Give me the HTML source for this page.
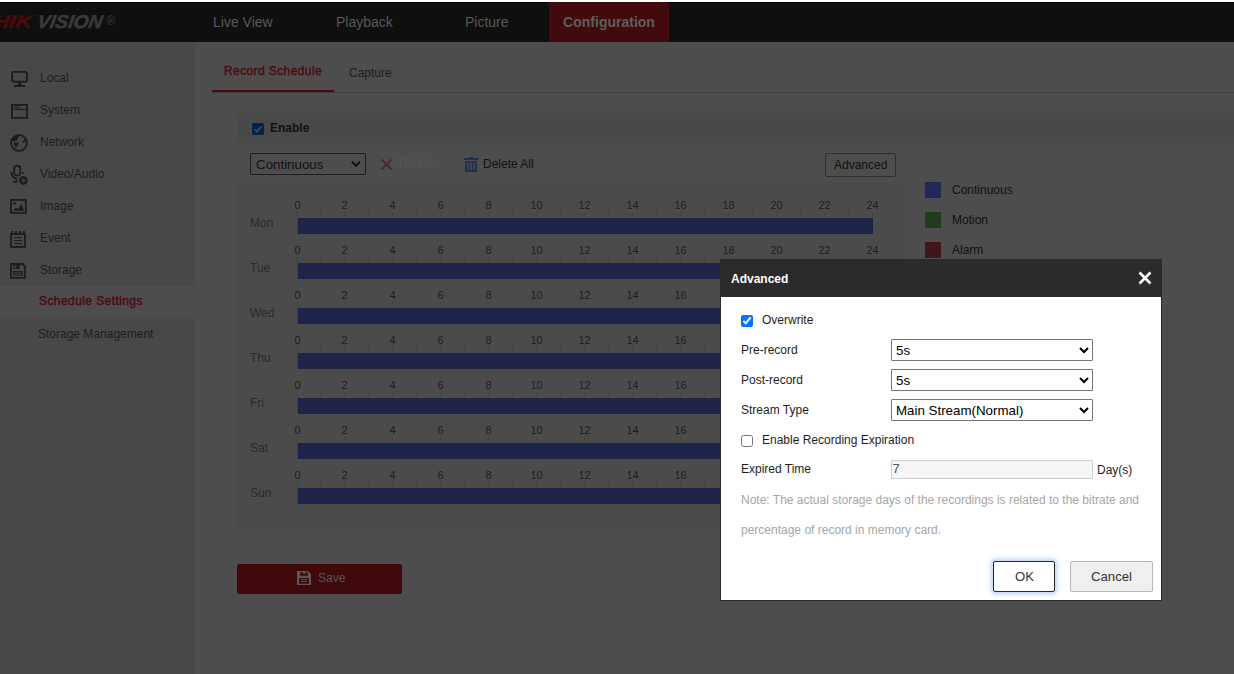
<!DOCTYPE html>
<html><head><meta charset="utf-8">
<style>
*{box-sizing:border-box;margin:0;padding:0}
html,body{width:1234px;height:674px;overflow:hidden;background:#4d4d4d;font-family:"Liberation Sans",sans-serif;font-size:12px;color:#1e1e1e}
.a{position:absolute;white-space:nowrap}
.t{position:absolute;white-space:nowrap;line-height:14px;height:14px}
#topwhite{position:absolute;left:0;top:0;width:1234px;height:2px;background:#fff}
#header{position:absolute;left:0;top:2px;width:1234px;height:40px;background:#0f0f0f;border-top:1px solid #000}
.nav{position:absolute;top:-1px;height:40px;line-height:40px;font-size:14px;color:#585858;white-space:nowrap}
#sidebar{position:absolute;left:0;top:42px;width:195px;height:632px;background:#484848}
.si{color:#1d1d1d}
.ic{position:absolute;left:0;top:0;overflow:visible}
.tk{position:absolute;width:1px;background:#424242}
.num{position:absolute;font-family:"Liberation Sans",sans-serif;font-size:11px;color:#1e1e1e;line-height:11px;width:30px;text-align:center;transform:translateX(0.5px)}
.bar{position:absolute;left:298px;width:575px;height:16px;background:#1f2548}
.day{position:absolute;left:250px;color:#2a2a2a;line-height:14px}
.lbl{position:absolute;left:741px;color:#1e1e1e;line-height:14px}
select.ms{position:absolute;left:891px;width:202px;height:22px;font-family:"Liberation Sans",sans-serif;font-size:13.333px;color:#000;background:#fff;border:1px solid #767676;border-radius:1px;padding-left:0}
</style></head>
<body>
<div id="topwhite"></div>
<div id="header">
  <svg class="ic" width="130" height="40" style="left:0;top:-1px">
    <g transform="translate(0,26) skewX(-9)" font-family="Liberation Sans" font-weight="bold" font-style="italic" font-size="18.6">
    <text x="-8" y="0" fill="#4a0a0c" stroke="#4a0a0c" stroke-width="0.5" textLength="39" lengthAdjust="spacingAndGlyphs">HIK</text>
    <text x="36.5" y="0" fill="#393939" stroke="#393939" stroke-width="0.5" textLength="65" lengthAdjust="spacingAndGlyphs">VISION</text>
    </g>
    <text x="106.5" y="22.5" font-family="Liberation Sans" font-size="12" fill="#3a3a3a">®</text>
  </svg>
  <div class="nav" style="left:213px">Live View</div>
  <div class="nav" style="left:336px">Playback</div>
  <div class="nav" style="left:465px">Picture</div>
  <div class="nav" style="left:549px;width:120px;background:#430a0d;font-weight:bold;text-align:center;color:#5e5e5e">Configuration</div>
</div>

<div id="sidebar"></div>
<div class="a" style="left:0;top:286px;width:195px;height:33px;background:#4d4d4d"></div>
<svg class="ic" width="40" height="300" style="left:0;top:0;position:absolute">
  <g fill="none" stroke="#1d1d1d" stroke-width="1.85">
    <rect x="12.1" y="71.9" width="14.8" height="9.8" rx="1.8"/>
    <rect x="11.95" y="104.95" width="15.1" height="12.9"/>
    <circle cx="19" cy="142.9" r="7.9"/>
    <rect x="14.1" y="165.7" width="6.2" height="9.9" rx="3.1"/>
    <path d="M11.4 172 Q11.6 177.8 16.6 178.6"/>
    <rect x="11.05" y="199.95" width="14.8" height="12.9"/>
    <rect x="11.05" y="234.05" width="13.9" height="12.9"/>
    <path d="M11.05 263.95 H22.6 L24.95 266.4 V277.85 H11.05 Z"/>
  </g>
  <g fill="#1d1d1d">
    <path d="M18.3 82 h2.8 v3.2 h-2.8z M14.2 85 h10.8 l0.2 1.9 h-11.2z"/>
    <rect x="11.5" y="108.8" width="16" height="1.2"/>
    <circle cx="14.6" cy="107.4" r="0.8"/><circle cx="16.6" cy="107.4" r="0.8"/><circle cx="18.6" cy="107.4" r="0.8"/>
    <path d="M12.3 140.5 L13 138 L15 136 L18.3 135.2 L18.6 137 L17.4 138.8 L16.8 141.1 L13.2 141.2 Z"/>
    <path d="M13.9 142.6 L18.9 142.6 L18.4 144.6 L16.9 146.3 L16.3 148.2 L15.4 147.4 L14.8 145.1 L13.8 144.4 Z"/>
    <path d="M22.2 141.8 L25 139.3 L25.9 141 L24.6 142.6 L22.8 143 Z"/>
    <path d="M15.6 178 h1.7 v3.4 h-1.7z M13.1 181 h4.4 v1.8 h-4.4z"/>
    <rect x="22.2" y="172" width="1.8" height="1.8"/>
    <circle cx="23.4" cy="180.4" r="4.3"/>
    <circle cx="14.5" cy="203.3" r="1.4"/>
    <path d="M13.2 210.7 L15.9 207.4 L18 209.2 L21.6 203.8 L24 210.7z"/>
    <rect x="11" y="231" width="1.9" height="2.5"/><rect x="15" y="231" width="1.9" height="2.5"/><rect x="19" y="231" width="1.9" height="2.5"/><rect x="23" y="231" width="1.9" height="2.5"/>
    <rect x="14.1" y="237" width="7.9" height="1.1"/><rect x="14.1" y="240" width="7.9" height="1.1"/><rect x="14.1" y="243" width="7.9" height="1.1"/>
    <path d="M13.2 265 h6.6 v3.8 h-6.6z"/>
    <path d="M13.2 271 h9.6 v4.8 h-9.6z"/>
  </g>
  <path d="M22.2 178.2 L25.8 180.4 L22.2 182.6z" fill="#484848"/>
  <rect x="14.5" y="265.6" width="1.3" height="2.6" fill="#484848"/>
  <rect x="14.3" y="272.3" width="7.4" height="0.8" fill="#484848"/>
  <rect x="14.3" y="274" width="7.4" height="0.8" fill="#484848"/>
</svg>
<div class="t si" style="left:40px;top:71px">Local</div>
<div class="t si" style="left:40px;top:103px">System</div>
<div class="t si" style="left:40px;top:135px">Network</div>
<div class="t si" style="left:40px;top:167px">Video/Audio</div>
<div class="t si" style="left:40px;top:199px">Image</div>
<div class="t si" style="left:40px;top:231px">Event</div>
<div class="t si" style="left:40px;top:263px">Storage</div>
<div class="t" style="left:39px;top:294px;letter-spacing:0.42px;-webkit-text-stroke:0.45px #4c0c12;color:#4c0c12">Schedule Settings</div>
<div class="t si" style="left:38px;top:327px">Storage Management</div>

<!-- tabs -->
<div class="t" style="left:224px;top:64px;letter-spacing:0.4px;-webkit-text-stroke:0.45px #4e0c12;color:#4e0c12">Record Schedule</div>
<div class="t" style="left:349px;top:66px;color:#1e1e1e">Capture</div>
<div class="a" style="left:212px;top:92px;width:1022px;height:1px;background:#3f3f3f"></div>
<div class="a" style="left:212px;top:90px;width:122px;height:2px;background:#480a0d"></div>

<!-- enable band -->
<div class="a" style="left:237px;top:113px;width:997px;height:30px;background:#494949"></div>
<div class="a" style="left:252px;top:123px;width:12px;height:12px;background:#00234c;border-radius:2px"></div>
<svg class="ic" style="position:absolute;left:252px;top:123px" width="12" height="12"><path d="M2.6 6.3 L4.9 8.6 L9.4 3.6" fill="none" stroke="#4d4d4d" stroke-width="1.5"/></svg>
<div class="t" style="left:270px;top:121px;font-weight:bold;color:#111">Enable</div>

<!-- toolbar -->
<div class="a" style="left:250px;top:153px;width:116px;height:22px;border:1px solid #1e1e1e;border-radius:2px;background:#4d4d4d"></div>
<div class="a" style="left:256px;top:156.5px;font-size:13.333px;line-height:15px;color:#111">Continuous</div>
<svg class="ic" style="position:absolute;left:350px;top:158px" width="12" height="12"><path d="M1.9 3.8 L5.9 7.8 L9.9 3.8" fill="none" stroke="#111" stroke-width="2.1"/></svg>
<svg class="ic" style="position:absolute;left:380px;top:158px" width="14" height="14"><path d="M1.5 1.5 L11.5 11.5 M11.5 1.5 L1.5 11.5" fill="none" stroke="#522629" stroke-width="1.9"/></svg>
<div class="t" style="left:399px;top:157px;color:#555555">Delete</div>
<svg class="ic" style="position:absolute;left:463px;top:156px" width="16" height="18" fill="#183350">
  <rect x="6.3" y="1" width="3.7" height="1.2"/>
  <rect x="1" y="2" width="14" height="2"/>
  <path d="M2 5 h12 v11 h-12z M4.2 6.2 v8 h1.4 v-8z M7.2 6.2 v8 h1.6 v-8z M10.4 6.2 v8 h1.4 v-8z" fill-rule="evenodd"/>
</svg>
<div class="t" style="left:483px;top:157px;color:#111">Delete All</div>
<div class="a" style="left:825px;top:153px;width:71px;height:24px;border:1px solid #2f2f2f;border-radius:2px"></div>
<div class="t" style="left:834px;top:158px;color:#111">Advanced</div>

<!-- schedule panel -->
<div class="a" style="left:237px;top:182px;width:673px;height:347px;background:#4b4b4b"></div>
<div id="sched"><div class="num" style="left:282px;top:200px">0</div><div class="num" style="left:329px;top:200px">2</div><div class="num" style="left:377px;top:200px">4</div><div class="num" style="left:425px;top:200px">6</div><div class="num" style="left:473px;top:200px">8</div><div class="num" style="left:521px;top:200px">10</div><div class="num" style="left:569px;top:200px">12</div><div class="num" style="left:617px;top:200px">14</div><div class="num" style="left:665px;top:200px">16</div><div class="num" style="left:713px;top:200px">18</div><div class="num" style="left:761px;top:200px">20</div><div class="num" style="left:809px;top:200px">22</div><div class="num" style="left:857px;top:200px">24</div><div class="tk" style="left:297px;top:212px;height:5px"></div><div class="tk" style="left:320px;top:212px;height:5px"></div><div class="tk" style="left:344px;top:212px;height:5px"></div><div class="tk" style="left:368px;top:212px;height:5px"></div><div class="tk" style="left:392px;top:212px;height:5px"></div><div class="tk" style="left:416px;top:212px;height:5px"></div><div class="tk" style="left:440px;top:212px;height:5px"></div><div class="tk" style="left:464px;top:212px;height:5px"></div><div class="tk" style="left:488px;top:212px;height:5px"></div><div class="tk" style="left:512px;top:212px;height:5px"></div><div class="tk" style="left:536px;top:212px;height:5px"></div><div class="tk" style="left:560px;top:212px;height:5px"></div><div class="tk" style="left:584px;top:212px;height:5px"></div><div class="tk" style="left:608px;top:212px;height:5px"></div><div class="tk" style="left:632px;top:212px;height:5px"></div><div class="tk" style="left:656px;top:212px;height:5px"></div><div class="tk" style="left:680px;top:212px;height:5px"></div><div class="tk" style="left:704px;top:212px;height:5px"></div><div class="tk" style="left:728px;top:212px;height:5px"></div><div class="tk" style="left:752px;top:212px;height:5px"></div><div class="tk" style="left:776px;top:212px;height:5px"></div><div class="tk" style="left:800px;top:212px;height:5px"></div><div class="tk" style="left:824px;top:212px;height:5px"></div><div class="tk" style="left:848px;top:212px;height:5px"></div><div class="tk" style="left:872px;top:212px;height:5px"></div><div class="tk" style="left:297px;top:212px;height:22px"></div><div class="bar" style="top:218px"></div><div class="num" style="left:282px;top:245px">0</div><div class="num" style="left:329px;top:245px">2</div><div class="num" style="left:377px;top:245px">4</div><div class="num" style="left:425px;top:245px">6</div><div class="num" style="left:473px;top:245px">8</div><div class="num" style="left:521px;top:245px">10</div><div class="num" style="left:569px;top:245px">12</div><div class="num" style="left:617px;top:245px">14</div><div class="num" style="left:665px;top:245px">16</div><div class="num" style="left:713px;top:245px">18</div><div class="num" style="left:761px;top:245px">20</div><div class="num" style="left:809px;top:245px">22</div><div class="num" style="left:857px;top:245px">24</div><div class="tk" style="left:297px;top:257px;height:5px"></div><div class="tk" style="left:320px;top:257px;height:5px"></div><div class="tk" style="left:344px;top:257px;height:5px"></div><div class="tk" style="left:368px;top:257px;height:5px"></div><div class="tk" style="left:392px;top:257px;height:5px"></div><div class="tk" style="left:416px;top:257px;height:5px"></div><div class="tk" style="left:440px;top:257px;height:5px"></div><div class="tk" style="left:464px;top:257px;height:5px"></div><div class="tk" style="left:488px;top:257px;height:5px"></div><div class="tk" style="left:512px;top:257px;height:5px"></div><div class="tk" style="left:536px;top:257px;height:5px"></div><div class="tk" style="left:560px;top:257px;height:5px"></div><div class="tk" style="left:584px;top:257px;height:5px"></div><div class="tk" style="left:608px;top:257px;height:5px"></div><div class="tk" style="left:632px;top:257px;height:5px"></div><div class="tk" style="left:656px;top:257px;height:5px"></div><div class="tk" style="left:680px;top:257px;height:5px"></div><div class="tk" style="left:704px;top:257px;height:5px"></div><div class="tk" style="left:728px;top:257px;height:5px"></div><div class="tk" style="left:752px;top:257px;height:5px"></div><div class="tk" style="left:776px;top:257px;height:5px"></div><div class="tk" style="left:800px;top:257px;height:5px"></div><div class="tk" style="left:824px;top:257px;height:5px"></div><div class="tk" style="left:848px;top:257px;height:5px"></div><div class="tk" style="left:872px;top:257px;height:5px"></div><div class="tk" style="left:297px;top:257px;height:22px"></div><div class="bar" style="top:263px"></div><div class="num" style="left:282px;top:290px">0</div><div class="num" style="left:329px;top:290px">2</div><div class="num" style="left:377px;top:290px">4</div><div class="num" style="left:425px;top:290px">6</div><div class="num" style="left:473px;top:290px">8</div><div class="num" style="left:521px;top:290px">10</div><div class="num" style="left:569px;top:290px">12</div><div class="num" style="left:617px;top:290px">14</div><div class="num" style="left:665px;top:290px">16</div><div class="num" style="left:713px;top:290px">18</div><div class="num" style="left:761px;top:290px">20</div><div class="num" style="left:809px;top:290px">22</div><div class="num" style="left:857px;top:290px">24</div><div class="tk" style="left:297px;top:302px;height:5px"></div><div class="tk" style="left:320px;top:302px;height:5px"></div><div class="tk" style="left:344px;top:302px;height:5px"></div><div class="tk" style="left:368px;top:302px;height:5px"></div><div class="tk" style="left:392px;top:302px;height:5px"></div><div class="tk" style="left:416px;top:302px;height:5px"></div><div class="tk" style="left:440px;top:302px;height:5px"></div><div class="tk" style="left:464px;top:302px;height:5px"></div><div class="tk" style="left:488px;top:302px;height:5px"></div><div class="tk" style="left:512px;top:302px;height:5px"></div><div class="tk" style="left:536px;top:302px;height:5px"></div><div class="tk" style="left:560px;top:302px;height:5px"></div><div class="tk" style="left:584px;top:302px;height:5px"></div><div class="tk" style="left:608px;top:302px;height:5px"></div><div class="tk" style="left:632px;top:302px;height:5px"></div><div class="tk" style="left:656px;top:302px;height:5px"></div><div class="tk" style="left:680px;top:302px;height:5px"></div><div class="tk" style="left:704px;top:302px;height:5px"></div><div class="tk" style="left:728px;top:302px;height:5px"></div><div class="tk" style="left:752px;top:302px;height:5px"></div><div class="tk" style="left:776px;top:302px;height:5px"></div><div class="tk" style="left:800px;top:302px;height:5px"></div><div class="tk" style="left:824px;top:302px;height:5px"></div><div class="tk" style="left:848px;top:302px;height:5px"></div><div class="tk" style="left:872px;top:302px;height:5px"></div><div class="tk" style="left:297px;top:302px;height:22px"></div><div class="bar" style="top:308px"></div><div class="num" style="left:282px;top:335px">0</div><div class="num" style="left:329px;top:335px">2</div><div class="num" style="left:377px;top:335px">4</div><div class="num" style="left:425px;top:335px">6</div><div class="num" style="left:473px;top:335px">8</div><div class="num" style="left:521px;top:335px">10</div><div class="num" style="left:569px;top:335px">12</div><div class="num" style="left:617px;top:335px">14</div><div class="num" style="left:665px;top:335px">16</div><div class="num" style="left:713px;top:335px">18</div><div class="num" style="left:761px;top:335px">20</div><div class="num" style="left:809px;top:335px">22</div><div class="num" style="left:857px;top:335px">24</div><div class="tk" style="left:297px;top:347px;height:5px"></div><div class="tk" style="left:320px;top:347px;height:5px"></div><div class="tk" style="left:344px;top:347px;height:5px"></div><div class="tk" style="left:368px;top:347px;height:5px"></div><div class="tk" style="left:392px;top:347px;height:5px"></div><div class="tk" style="left:416px;top:347px;height:5px"></div><div class="tk" style="left:440px;top:347px;height:5px"></div><div class="tk" style="left:464px;top:347px;height:5px"></div><div class="tk" style="left:488px;top:347px;height:5px"></div><div class="tk" style="left:512px;top:347px;height:5px"></div><div class="tk" style="left:536px;top:347px;height:5px"></div><div class="tk" style="left:560px;top:347px;height:5px"></div><div class="tk" style="left:584px;top:347px;height:5px"></div><div class="tk" style="left:608px;top:347px;height:5px"></div><div class="tk" style="left:632px;top:347px;height:5px"></div><div class="tk" style="left:656px;top:347px;height:5px"></div><div class="tk" style="left:680px;top:347px;height:5px"></div><div class="tk" style="left:704px;top:347px;height:5px"></div><div class="tk" style="left:728px;top:347px;height:5px"></div><div class="tk" style="left:752px;top:347px;height:5px"></div><div class="tk" style="left:776px;top:347px;height:5px"></div><div class="tk" style="left:800px;top:347px;height:5px"></div><div class="tk" style="left:824px;top:347px;height:5px"></div><div class="tk" style="left:848px;top:347px;height:5px"></div><div class="tk" style="left:872px;top:347px;height:5px"></div><div class="tk" style="left:297px;top:347px;height:22px"></div><div class="bar" style="top:353px"></div><div class="num" style="left:282px;top:380px">0</div><div class="num" style="left:329px;top:380px">2</div><div class="num" style="left:377px;top:380px">4</div><div class="num" style="left:425px;top:380px">6</div><div class="num" style="left:473px;top:380px">8</div><div class="num" style="left:521px;top:380px">10</div><div class="num" style="left:569px;top:380px">12</div><div class="num" style="left:617px;top:380px">14</div><div class="num" style="left:665px;top:380px">16</div><div class="num" style="left:713px;top:380px">18</div><div class="num" style="left:761px;top:380px">20</div><div class="num" style="left:809px;top:380px">22</div><div class="num" style="left:857px;top:380px">24</div><div class="tk" style="left:297px;top:392px;height:5px"></div><div class="tk" style="left:320px;top:392px;height:5px"></div><div class="tk" style="left:344px;top:392px;height:5px"></div><div class="tk" style="left:368px;top:392px;height:5px"></div><div class="tk" style="left:392px;top:392px;height:5px"></div><div class="tk" style="left:416px;top:392px;height:5px"></div><div class="tk" style="left:440px;top:392px;height:5px"></div><div class="tk" style="left:464px;top:392px;height:5px"></div><div class="tk" style="left:488px;top:392px;height:5px"></div><div class="tk" style="left:512px;top:392px;height:5px"></div><div class="tk" style="left:536px;top:392px;height:5px"></div><div class="tk" style="left:560px;top:392px;height:5px"></div><div class="tk" style="left:584px;top:392px;height:5px"></div><div class="tk" style="left:608px;top:392px;height:5px"></div><div class="tk" style="left:632px;top:392px;height:5px"></div><div class="tk" style="left:656px;top:392px;height:5px"></div><div class="tk" style="left:680px;top:392px;height:5px"></div><div class="tk" style="left:704px;top:392px;height:5px"></div><div class="tk" style="left:728px;top:392px;height:5px"></div><div class="tk" style="left:752px;top:392px;height:5px"></div><div class="tk" style="left:776px;top:392px;height:5px"></div><div class="tk" style="left:800px;top:392px;height:5px"></div><div class="tk" style="left:824px;top:392px;height:5px"></div><div class="tk" style="left:848px;top:392px;height:5px"></div><div class="tk" style="left:872px;top:392px;height:5px"></div><div class="tk" style="left:297px;top:392px;height:22px"></div><div class="bar" style="top:398px"></div><div class="num" style="left:282px;top:425px">0</div><div class="num" style="left:329px;top:425px">2</div><div class="num" style="left:377px;top:425px">4</div><div class="num" style="left:425px;top:425px">6</div><div class="num" style="left:473px;top:425px">8</div><div class="num" style="left:521px;top:425px">10</div><div class="num" style="left:569px;top:425px">12</div><div class="num" style="left:617px;top:425px">14</div><div class="num" style="left:665px;top:425px">16</div><div class="num" style="left:713px;top:425px">18</div><div class="num" style="left:761px;top:425px">20</div><div class="num" style="left:809px;top:425px">22</div><div class="num" style="left:857px;top:425px">24</div><div class="tk" style="left:297px;top:437px;height:5px"></div><div class="tk" style="left:320px;top:437px;height:5px"></div><div class="tk" style="left:344px;top:437px;height:5px"></div><div class="tk" style="left:368px;top:437px;height:5px"></div><div class="tk" style="left:392px;top:437px;height:5px"></div><div class="tk" style="left:416px;top:437px;height:5px"></div><div class="tk" style="left:440px;top:437px;height:5px"></div><div class="tk" style="left:464px;top:437px;height:5px"></div><div class="tk" style="left:488px;top:437px;height:5px"></div><div class="tk" style="left:512px;top:437px;height:5px"></div><div class="tk" style="left:536px;top:437px;height:5px"></div><div class="tk" style="left:560px;top:437px;height:5px"></div><div class="tk" style="left:584px;top:437px;height:5px"></div><div class="tk" style="left:608px;top:437px;height:5px"></div><div class="tk" style="left:632px;top:437px;height:5px"></div><div class="tk" style="left:656px;top:437px;height:5px"></div><div class="tk" style="left:680px;top:437px;height:5px"></div><div class="tk" style="left:704px;top:437px;height:5px"></div><div class="tk" style="left:728px;top:437px;height:5px"></div><div class="tk" style="left:752px;top:437px;height:5px"></div><div class="tk" style="left:776px;top:437px;height:5px"></div><div class="tk" style="left:800px;top:437px;height:5px"></div><div class="tk" style="left:824px;top:437px;height:5px"></div><div class="tk" style="left:848px;top:437px;height:5px"></div><div class="tk" style="left:872px;top:437px;height:5px"></div><div class="tk" style="left:297px;top:437px;height:22px"></div><div class="bar" style="top:443px"></div><div class="num" style="left:282px;top:470px">0</div><div class="num" style="left:329px;top:470px">2</div><div class="num" style="left:377px;top:470px">4</div><div class="num" style="left:425px;top:470px">6</div><div class="num" style="left:473px;top:470px">8</div><div class="num" style="left:521px;top:470px">10</div><div class="num" style="left:569px;top:470px">12</div><div class="num" style="left:617px;top:470px">14</div><div class="num" style="left:665px;top:470px">16</div><div class="num" style="left:713px;top:470px">18</div><div class="num" style="left:761px;top:470px">20</div><div class="num" style="left:809px;top:470px">22</div><div class="num" style="left:857px;top:470px">24</div><div class="tk" style="left:297px;top:482px;height:5px"></div><div class="tk" style="left:320px;top:482px;height:5px"></div><div class="tk" style="left:344px;top:482px;height:5px"></div><div class="tk" style="left:368px;top:482px;height:5px"></div><div class="tk" style="left:392px;top:482px;height:5px"></div><div class="tk" style="left:416px;top:482px;height:5px"></div><div class="tk" style="left:440px;top:482px;height:5px"></div><div class="tk" style="left:464px;top:482px;height:5px"></div><div class="tk" style="left:488px;top:482px;height:5px"></div><div class="tk" style="left:512px;top:482px;height:5px"></div><div class="tk" style="left:536px;top:482px;height:5px"></div><div class="tk" style="left:560px;top:482px;height:5px"></div><div class="tk" style="left:584px;top:482px;height:5px"></div><div class="tk" style="left:608px;top:482px;height:5px"></div><div class="tk" style="left:632px;top:482px;height:5px"></div><div class="tk" style="left:656px;top:482px;height:5px"></div><div class="tk" style="left:680px;top:482px;height:5px"></div><div class="tk" style="left:704px;top:482px;height:5px"></div><div class="tk" style="left:728px;top:482px;height:5px"></div><div class="tk" style="left:752px;top:482px;height:5px"></div><div class="tk" style="left:776px;top:482px;height:5px"></div><div class="tk" style="left:800px;top:482px;height:5px"></div><div class="tk" style="left:824px;top:482px;height:5px"></div><div class="tk" style="left:848px;top:482px;height:5px"></div><div class="tk" style="left:872px;top:482px;height:5px"></div><div class="tk" style="left:297px;top:482px;height:22px"></div><div class="bar" style="top:488px"></div><div class="day" style="top:216px">Mon</div><div class="day" style="top:261px">Tue</div><div class="day" style="top:306px">Wed</div><div class="day" style="top:351px">Thu</div><div class="day" style="top:396px">Fri</div><div class="day" style="top:441px">Sat</div><div class="day" style="top:486px">Sun</div></div>

<!-- legend -->
<div class="a" style="left:925px;top:182px;width:16px;height:16px;background:#212958"></div>
<div class="a" style="left:925px;top:212px;width:16px;height:16px;background:#233a1f"></div>
<div class="a" style="left:925px;top:242px;width:16px;height:16px;background:#421618"></div>
<div class="t" style="left:952px;top:183px;color:#111">Continuous</div>
<div class="t" style="left:952px;top:213px;color:#111">Motion</div>
<div class="t" style="left:952px;top:243px;color:#111">Alarm</div>

<!-- save -->
<div class="a" style="left:237px;top:564px;width:165px;height:30px;background:#400a0d;border-radius:2px"></div>
<svg class="ic" style="position:absolute;left:292px;top:566px" width="24" height="24">
  <path d="M5 5 H16 L19 8 V19 H5 Z" fill="#585858"/>
  <rect x="7.1" y="12.1" width="9.8" height="5.7" rx="0.8" fill="#400a0d"/>
  <rect x="8.2" y="6.2" width="7.6" height="3.6" fill="#400a0d"/>
  <rect x="11" y="6.2" width="2.7" height="1.6" fill="#585858"/>
  <rect x="9.1" y="13.1" width="5.9" height="0.9" fill="#585858"/>
  <rect x="9.1" y="15.1" width="5.9" height="0.9" fill="#585858"/>
</svg>
<div class="t" style="left:318px;top:571px;color:#565656">Save</div>

<!-- modal -->
<div class="a" style="left:720px;top:259px;width:442px;height:342px;background:#fff;border:1px solid #2b2b2b"></div>
<div class="a" style="left:720px;top:259px;width:442px;height:38px;background:#2b2b2b"></div>
<div class="t" style="left:731px;top:272px;font-weight:bold;color:#fff">Advanced</div>
<svg class="ic" style="position:absolute;left:1137px;top:270px" width="16" height="16"><path d="M2.5 2.5 L13.5 13.5 M13.5 2.5 L2.5 13.5" fill="none" stroke="#fff" stroke-width="2.6"/></svg>

<input type="checkbox" checked style="position:absolute;left:741px;top:315px;width:12px;height:12px;margin:0">
<div class="lbl" style="left:762px;top:313px">Overwrite</div>
<div class="lbl" style="top:343px">Pre-record</div>
<select class="ms" style="top:339px"><option>5s</option></select>
<div class="lbl" style="top:373px">Post-record</div>
<select class="ms" style="top:369px"><option>5s</option></select>
<div class="lbl" style="top:403px">Stream Type</div>
<select class="ms" style="top:399px"><option>Main Stream(Normal)</option></select>
<input type="checkbox" style="position:absolute;left:741px;top:435px;width:12px;height:12px;margin:0">
<div class="lbl" style="left:762px;top:433px">Enable Recording Expiration</div>
<div class="lbl" style="top:462px">Expired Time</div>
<div class="a" style="left:891px;top:460px;width:202px;height:19px;background:#f6f6f6;border:1px solid #cfcfcf"></div>
<div class="t" style="left:892.5px;top:462px;color:#555;font-size:13px">7</div>
<div class="lbl" style="left:1097px;top:463px">Day(s)</div>
<div class="lbl" style="top:493px;color:#a6a6a6">Note: The actual storage days of the recordings is related to the bitrate and</div>
<div class="lbl" style="top:523px;color:#a6a6a6">percentage of record in memory card.</div>
<div class="a" style="left:993px;top:561px;width:62px;height:31px;border:1.3px solid #262626;border-radius:2px;box-shadow:0 0 5px 2px rgba(110,150,235,0.45);background:#fff"></div>
<div class="a" style="left:1015px;top:568.5px;font-size:13.2px;line-height:16px;color:#333">OK</div>
<div class="a" style="left:1070px;top:561px;width:83px;height:31px;border:1px solid #b8b8b8;border-radius:2px;background:#efefef"></div>
<div class="a" style="left:1091px;top:568.5px;font-size:13.2px;line-height:16px;color:#333">Cancel</div>
</body></html>
